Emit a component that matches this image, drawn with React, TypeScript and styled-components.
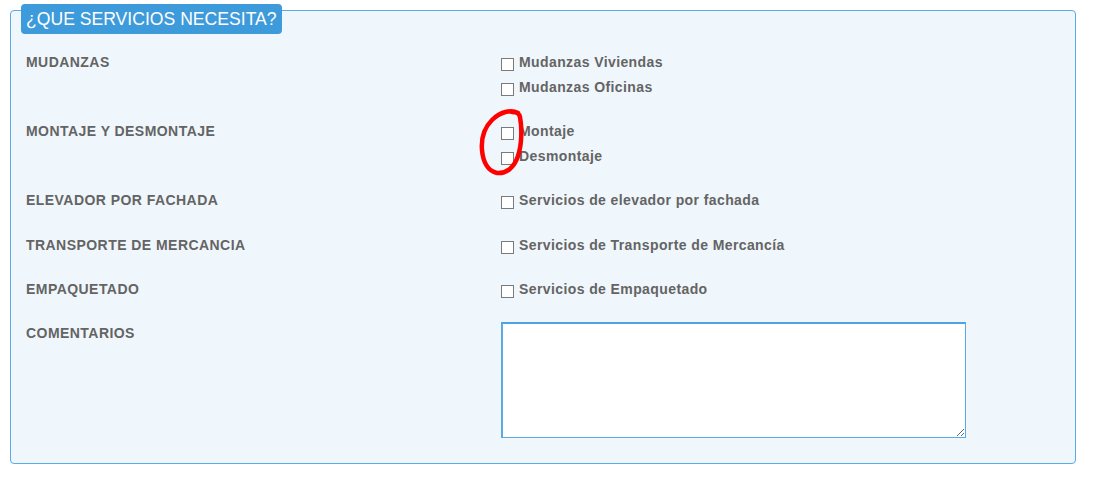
import React from 'react';
import styled, { createGlobalStyle } from 'styled-components';

const GlobalStyle = createGlobalStyle`
  html, body {
    margin: 0;
    padding: 0;
    background: #ffffff;
    font-family: "Liberation Sans", Arial, sans-serif;
  }
`;

interface ServiceRow {
  label: string;
  options?: string[];
  comments?: boolean;
}

const rows: ServiceRow[] = [
  { label: 'MUDANZAS', options: ['Mudanzas Viviendas', 'Mudanzas Oficinas'] },
  { label: 'MONTAJE Y DESMONTAJE', options: ['Montaje', 'Desmontaje'] },
  { label: 'ELEVADOR POR FACHADA', options: ['Servicios de elevador por fachada'] },
  { label: 'TRANSPORTE DE MERCANCIA', options: ['Servicios de Transporte de Mercancía'] },
  { label: 'EMPAQUETADO', options: ['Servicios de Empaquetado'] },
  { label: 'COMENTARIOS', comments: true },
];

const App: React.FC = () => {
  return (
    <Page>
      <GlobalStyle />
      <Panel>
        <Legend>¿QUE SERVICIOS NECESITA?</Legend>
        <Rows>
          {rows.map((row) => (
            <Row key={row.label}>
              <RowLabel>{row.label}</RowLabel>
              <Options>
                {row.options &&
                  row.options.map((opt) => (
                    <Option key={opt}>
                      <Check type="checkbox" />
                      <span>{opt}</span>
                    </Option>
                  ))}
                {row.comments && <Comments />}
              </Options>
            </Row>
          ))}
        </Rows>
      </Panel>
      {/* hand drawn mark around the Montaje / Desmontaje checkboxes */}
      <Mark width="50" height="70" viewBox="0 0 50 70">
        <path
          d="M40 5 C33 1 22 4 14 12 C7 19 3 30 4 42 C5 54 10 63 19 65 C28 66 36 60 40 48 C44 36 44 20 42 9 C41 5 39 4 34 4"
          fill="none"
          stroke="#ff0000"
          strokeWidth="4.5"
          strokeLinecap="round"
          strokeLinejoin="round"
        />
      </Mark>
    </Page>
  );
};

const Page = styled.div`
  position: relative;
  padding: 10px 24px 15px 10px;
  width: 1100px;
  box-sizing: border-box;
`;

const Panel = styled.div`
  border: 1px solid #5aaae6;
  border-radius: 4px;
  background: #f0f7fc;
  padding: 0 15px 25px 15px;
`;

const Legend = styled.div`
  display: inline-block;
  margin: -7px 0 0 -5px;
  padding: 0 5px;
  height: 30px;
  line-height: 31px;
  background: #3d9bdb;
  color: #ffffff;
  font-size: 17.6px;
  border-radius: 4px;
`;

const Rows = styled.div`
  display: flex;
  flex-direction: column;
  gap: 19.2px;
  margin-top: 16px;
`;

const Row = styled.div`
  display: grid;
  grid-template-columns: 475px 1fr;
`;

const RowLabel = styled.div`
  font-size: 14px;
  font-weight: bold;
  letter-spacing: 0.45px;
  line-height: 25px;
  color: #646464;
`;

const Options = styled.div`
  display: flex;
  flex-direction: column;
`;

const Option = styled.label`
  display: flex;
  align-items: flex-start;
  gap: 5px;
  height: 25px;
  line-height: 25px;
  font-size: 14px;
  font-weight: bold;
  letter-spacing: 0.4px;
  color: #646464;
`;

const Check = styled.input`
  appearance: none;
  margin: 8px 0 0 0;
  width: 11px;
  height: 11px;
  border: 1px solid #7a7a7a;
  background: #ffffff;
  box-sizing: content-box;
`;

const Comments = styled.textarea`
  margin-top: 1px;
  width: 462px;
  height: 113px;
  border: 1px solid #5aaae6;
  border-top: 2px solid #4ea3e4;
  border-left: 2px solid #5aaae6;
  background: #ffffff;
  padding: 0;
  outline: none;
`;

const Mark = styled.svg`
  position: absolute;
  left: 478px;
  top: 108px;
`;

export default App;
